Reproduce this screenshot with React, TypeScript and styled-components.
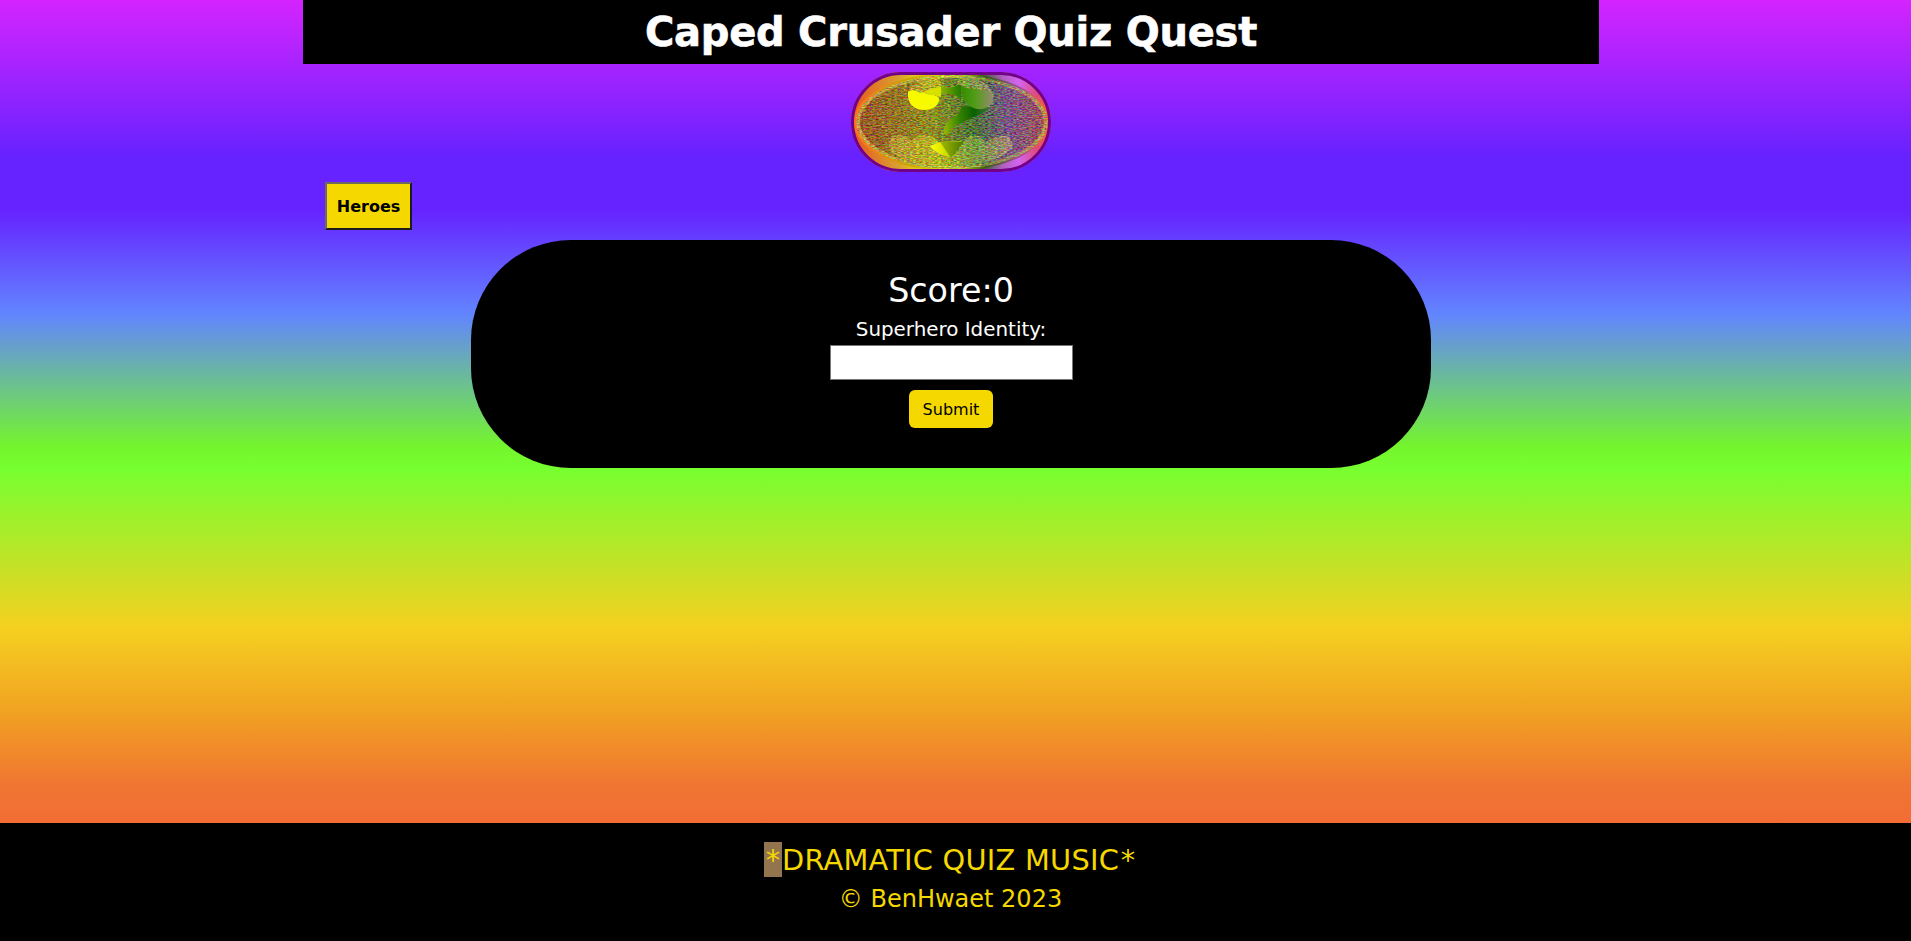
import React from "react";
import styled, { createGlobalStyle } from "styled-components";

const Global = createGlobalStyle`
  * { box-sizing: border-box; }
  body { margin: 0; font-family: Verdana, "DejaVu Sans", sans-serif; }
`;
const Page = styled.div`
  height: 941px;
  display: flex;
  flex-direction: column;
  align-items: center;
  background: linear-gradient(180deg, #d424ff 0, #6622ff 157px, #6622ff 209px, #6285ff 314px, #74f52c 447px, #77ff30 469px, #f5d020 628px, #f1a222 711px, #f07531 785px, #f26d35 823px);
`;
const Main = styled.main`
  flex: 1;
  width: 1296px;
  margin-right: 9px;
  display: flex;
  flex-direction: column;
  align-items: center;
`;
const Header = styled.h1`
  width: 100%;
  height: 64px;
  margin: 0 0 8px;
  background: #000;
  color: #fff;
  text-align: center;
  font-size: 40px;
  line-height: 65px;
  letter-spacing: -0.25px;
  -webkit-text-stroke: 0.6px #fff;
  white-space: nowrap;
`;
const LogoArt = styled.svg`
  display: block;
  width: 200px;
  height: 100px;
`;
const Heroes = styled.button`
  align-self: flex-start;
  width: 87px;
  height: 48px;
  margin: 10px 0 10px 22px;
  padding: 0;
  background: #f5d800;
  border: 2px solid;
  border-color: #6d6a60 #1c1c1c #1c1c1c #6d6a60;
  color: #000;
  font: bold 16px Verdana, "DejaVu Sans", sans-serif;
`;
const Card = styled.form`
  width: 960px;
  height: 228px;
  border-radius: 100px;
  background: #000;
  color: #fff;
  display: flex;
  flex-direction: column;
  align-items: center;
  padding-top: 31px;
`;
const Score = styled.div`
  font-size: 33.3px;
  line-height: 39px;
`;
const Label = styled.label`
  font-size: 19.9px;
  line-height: 24px;
  margin: 8px 0 3px;
`;
const Field = styled.input`
  width: 243px;
  height: 35px;
  border: 1px solid #767676;
  background: #fff;
  margin-bottom: 10px;
`;
const Submit = styled.button`
  width: 84px;
  height: 38px;
  border: 0;
  border-radius: 6px;
  padding: 0;
  background: #f5d800;
  color: #000;
  font: 16px Verdana, "DejaVu Sans", sans-serif;
`;
const Footer = styled.footer`
  width: 100%;
  height: 118px;
  padding: 19px 10px 0 0;
  background: #000;
  color: #f5d800;
  text-align: center;
`;
const Music = styled.div`
  display: flex;
  justify-content: center;
  font-size: 28.8px;
  line-height: 36px;
  height: 35px;
  letter-spacing: 0.25px;
`;
const Star = styled.span<{ $marked?: boolean }>`
  width: 18px;
  height: 35px;
  text-align: center;
  background: ${(p) => (p.$marked ? "#92754f" : "transparent")};
`;
const Copyright = styled.div`
  font-size: 24px;
  line-height: 30px;
  margin-top: 7px;
`;

function Logo() {
  return (
    <LogoArt viewBox="0 0 200 100" aria-label="Bat emblem">
      <defs>
        <linearGradient id="base" x1="0" x2="1" y1="0" y2="0">
          <stop offset="0" stopColor="#e85520" />
          <stop offset="0.24" stopColor="#d8a030" />
          <stop offset="0.42" stopColor="#f4f000" />
          <stop offset="0.5" stopColor="#a0b800" />
          <stop offset="0.64" stopColor="#286010" />
          <stop offset="0.76" stopColor="#b060c0" />
          <stop offset="0.84" stopColor="#d265f0" />
          <stop offset="0.93" stopColor="#df4a78" />
          <stop offset="1" stopColor="#ff6030" />
        </linearGradient>
        <linearGradient id="green" gradientUnits="userSpaceOnUse" x1="90" x2="140" y1="40" y2="35">
          <stop offset="0" stopColor="#9bb800" />
          <stop offset="0.35" stopColor="#358400" />
          <stop offset="0.65" stopColor="#0a6000" />
          <stop offset="1" stopColor="#4a7740" />
        </linearGradient>
        <linearGradient id="eye" x1="0" x2="1" y1="0" y2="0">
          <stop offset="0" stopColor="#348c00" />
          <stop offset="0.45" stopColor="#529c18" />
          <stop offset="1" stopColor="#978b70" />
        </linearGradient>
        <linearGradient id="tail" x1="0" x2="1" y1="0" y2="0">
          <stop offset="0" stopColor="#ffff00" />
          <stop offset="0.4" stopColor="#d8e600" />
          <stop offset="1" stopColor="#94b500" />
        </linearGradient>
        <linearGradient id="vee" x1="0" x2="1" y1="0" y2="0">
          <stop offset="0" stopColor="#a6b800" />
          <stop offset="1" stopColor="#4c7c00" />
        </linearGradient>
        <linearGradient id="rim" x1="0" x2="1" y1="0" y2="0">
          <stop offset="0" stopColor="#ff7020" />
          <stop offset="0.3" stopColor="#c8a800" />
          <stop offset="0.5" stopColor="#e8f000" />
          <stop offset="0.68" stopColor="#345818" />
          <stop offset="0.85" stopColor="#a84c9a" />
          <stop offset="1" stopColor="#ff6a18" />
        </linearGradient>
        <linearGradient id="shade" x1="0" x2="1" y1="0" y2="0">
          <stop offset="0" stopColor="#a83c08" />
          <stop offset="0.4" stopColor="#989800" />
          <stop offset="0.62" stopColor="#286820" />
          <stop offset="0.8" stopColor="#743aa0" />
          <stop offset="1" stopColor="#ad365c" />
        </linearGradient>
        <linearGradient id="lobe" x1="0" x2="1" y1="0" y2="0">
          <stop offset="0" stopColor="#e8b830" />
          <stop offset="0.4" stopColor="#f4f400" />
          <stop offset="0.7" stopColor="#90c838" />
          <stop offset="1" stopColor="#d8a888" />
        </linearGradient>
        <filter id="grain" x="0" y="0" width="100%" height="100%" colorInterpolationFilters="sRGB">
          <feTurbulence type="fractalNoise" baseFrequency="0.32 0.9" numOctaves="2" seed="7" />
          <feColorMatrix values="2.4 0 0 0 -0.68  0 2.4 0 0 -0.68  0 0 2.4 0 -0.84  0 0 0 0 1" />
        </filter>
        <clipPath id="pill"><rect width="200" height="100" rx="50" /></clipPath>
        <clipPath id="oval"><ellipse cx="101" cy="50" rx="96" ry="47" /></clipPath>
      </defs>
      <g clipPath="url(#pill)">
        <rect width="200" height="100" fill="url(#base)" />
        <ellipse cx="100.5" cy="50" rx="98" ry="49" fill="url(#rim)" />
        <g clipPath="url(#oval)">
          <rect width="200" height="100" fill="url(#rim)" />
          <rect width="200" height="100" fill="#e4ec58" opacity="0.4" />
          <ellipse cx="101" cy="50" rx="92" ry="44" fill="url(#shade)" />
          <g fill="url(#lobe)" opacity="0.7">
            <path d="M57 25C57 12 72 5 88 5L91 14L98 16L106 13L108 5C130 4 143 15 142 27C140 43 112 42 110 16L90 17C88 42 58 43 57 25Z" />
            <path d="M38 76C35 61 54 60 60 69C68 60 82 62 89 72L100 86L112 72C116 61 131 61 134 71C147 61 164 61 161 75C157 84 136 93 105 94H88C59 91 41 85 38 76Z" />
          </g>
          <rect width="200" height="100" filter="url(#grain)" opacity="0.4" />
        </g>
        <path d="M57 20C61 17 65 18 69 21C73 18 76 24 82 23C87 24 89 27 88 29C86 35 80 38 73 38C63 38 56 31 57 20Z" fill="#f8fb00" />
        <path d="M73 20C78 17 85 15 90 15V25L84 23C80 24 76 22 73 20Z" fill="#d8e000" />
        <path d="M90 14L97 16L105 14L108 12L110 14V34L140 35C132 43 119 45 111 51C102 53 98 59 97 63L93 62C91 53 99 46 107 43C112 37 111 28 106 24L90 20Z" fill="url(#green)" />
        <path d="M110 14C118 18 125 16 131 18C138 17 142 21 142 27C141 34 134 38 126 37C116 35 110 27 110 14Z" fill="url(#eye)" />
        <path d="M79 74L89 70L111 69L108 75C104 77 101 81 100 86C92 83 84 81 79 74Z" fill="url(#tail)" />
        <path d="M89 70L112 70L100 86Z" fill="url(#vee)" />
      </g>
      <rect x="1.5" y="1.5" width="197" height="97" rx="48.5" fill="none" stroke="#720088" strokeWidth="3" />
    </LogoArt>
  );
}

export default function App() {
  return (
    <>
      <Global />
      <Page>
        <Main>
          <Header>Caped Crusader Quiz Quest</Header>
          <Logo />
          <Heroes>Heroes</Heroes>
          <Card>
            <Score>Score:0</Score>
            <Label htmlFor="identity">Superhero Identity:</Label>
            <Field id="identity" />
            <Submit type="button">Submit</Submit>
          </Card>
        </Main>
        <Footer>
          <Music><Star $marked>*</Star>DRAMATIC QUIZ MUSIC<Star>*</Star></Music>
          <Copyright>© BenHwaet 2023</Copyright>
        </Footer>
      </Page>
    </>
  );
}
